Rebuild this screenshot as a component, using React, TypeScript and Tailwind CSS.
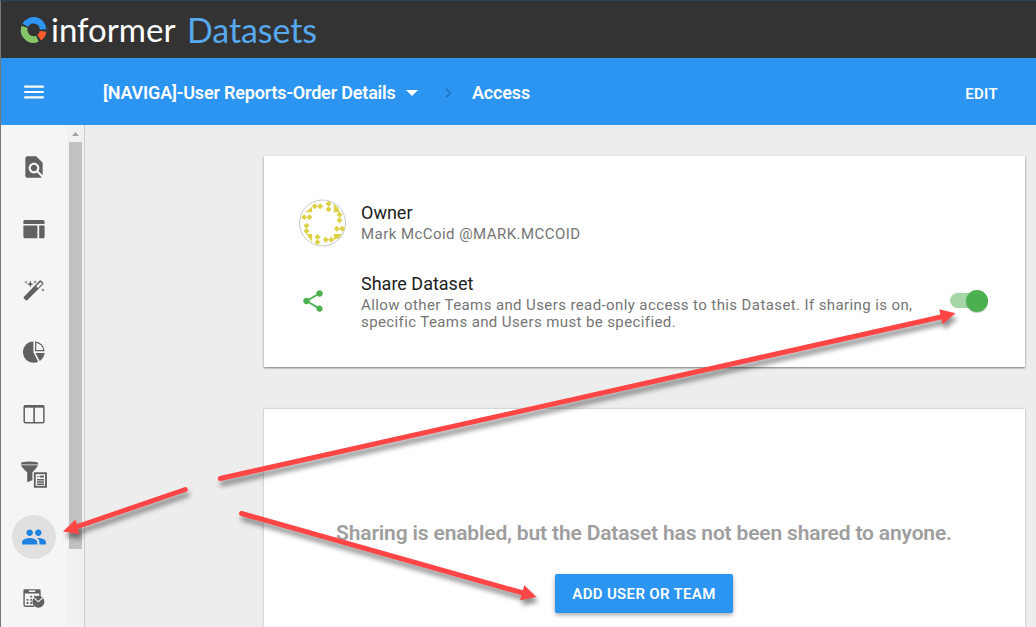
import type { ReactNode } from "react";
import { MdFindInPage, MdPeople, MdShare, MdMenu } from "react-icons/md";

const DIAMONDS = [
  [105, 79], [121, 79], [146, 71], [146, 88], [179, 104], [179, 121], [171, 146], [187, 146],
  [73, 112], [89, 112], [80, 137], [80, 153], [113, 171], [113, 187], [138, 179], [154, 179],
];

function Logo() {
  return (
    <svg width="28" height="28" viewBox="0 0 28 28" className="shrink-0" fill="none" strokeWidth="6.6">
      <path d="M5.4 9.3A9.4 9.4 0 0 1 23.1 13.4" stroke="#2b95f1" />
      <path d="M23.1 15.4A9.4 9.4 0 0 1 19.2 21.8" stroke="#ff5a2c" />
      <path d="M17.4 22.7A9.4 9.4 0 0 1 4.7 10.9" stroke="#87c668" />
    </svg>
  );
}

function LayoutIcon() {
  return (
    <svg width="26" height="26" viewBox="0 0 26 26" fill="#616161">
      <path d="M2.4 7.9V5.4Q2.4 3.9 3.9 3.9H22Q23.6 3.9 23.6 5.4V7.9Z" />
      <path d="M2.4 9.4H16.4V22.3H3.9Q2.4 22.3 2.4 20.8Z" />
      <path d="M18.2 9.4H23.6V20.8Q23.6 22.3 22 22.3H18.2Z" />
    </svg>
  );
}

function WandIcon() {
  return (
    <svg width="26" height="26" viewBox="0 1 26 26" fill="#616161">
      <path fillRule="evenodd" d="M2.8 20.1L18.4 3.8Q19.3 2.9 20.3 3.8L22 5.5Q22.9 6.5 22 7.4L6.2 23.2Q5.5 23.8 4.8 23.2L2.8 21.3Q2.3 20.7 2.8 20.1ZM15.2 9.2L17 11L21.2 6.7L19.4 4.9Z" />
      <path d="M9.3 3.4L10.2 6.2L12.8 7L10.2 7.9L9.3 10.6L8.4 7.9L5.8 7L8.4 6.2Z" />
      <path d="M5 3.5L5.5 4.7L6.7 5.1L5.5 5.6L5 6.8L4.5 5.6L3.3 5.1L4.5 4.7ZM14 3.3L14.5 4.5L15.7 5L14.5 5.5L14 6.7L13.5 5.5L12.3 5L13.5 4.5ZM21.9 11.2L22.4 12.4L23.6 12.9L22.4 13.4L21.9 14.6L21.4 13.4L20.2 12.9L21.4 12.4Z" />
    </svg>
  );
}

function PieIcon() {
  return (
    <svg width="26" height="26" viewBox="0 0 26 26" fill="#616161">
      <path d="M12.4 2.4A10.7 10.7 0 1 0 17.2 22.8L12.4 13.2Z" />
      <path d="M14.7 3.1A9.5 9.5 0 0 1 22.9 11.7H14.7Z" fill="none" stroke="#616161" strokeWidth="1.2" />
      <path d="M14.4 14H23.6Q23.2 18.9 18.8 22Z" />
    </svg>
  );
}

function ColumnsIcon() {
  return (
    <svg width="26" height="26" viewBox="0 0 26 26" fill="none" stroke="#616161">
      <rect x="3.2" y="4.8" width="19.7" height="17" rx="1.2" strokeWidth="1.5" />
      <path d="M3 5.5H23" strokeWidth="2.4" />
      <path d="M13.1 6V22" strokeWidth="1.6" />
    </svg>
  );
}

function FilterIcon() {
  return (
    <svg width="28" height="28" viewBox="0 0 28 28" fill="#616161">
      <path d="M1 2.2Q1 .6 9.5 .6T18 2.2V3.5H1Z" />
      <path d="M1 4.2H18Q17.8 5.8 12.4 11.3V19.3L7.2 21.2V11.3Q1.2 5.8 1 4.2Z" />
      <rect x="14.8" y="12.2" width="11.2" height="13.6" fill="#f5f5f5" stroke="#616161" strokeWidth="1.9" />
      <path d="M17 18.7H24M17 21H24M17 23.3H24" stroke="#616161" strokeWidth="1.4" />
      <path d="M17 15.6H19.3" stroke="#616161" strokeWidth="0.8" />
      <path d="M19.8 15.6H24" stroke="#616161" strokeWidth="2" />
    </svg>
  );
}

function ScheduleIcon() {
  return (
    <svg width="26" height="26" viewBox="0 0 26 26" fill="#616161">
      <path d="M3.6 3.2H18.3Q19.6 3.2 19.6 4.5V7.6H2.4V4.5Q2.4 3.2 3.6 3.2Z" />
      <path d="M3.1 7V18.9Q3.1 20.3 4.5 20.3H13M19 7V10" fill="none" stroke="#616161" strokeWidth="1.4" />
      <path d="M8 5.2H14.3" stroke="#f5f5f5" strokeWidth="1.6" />
      <path d="M9.3 10.6H11.1M13 10.6H14.8M5.6 13.8H7.4M9.3 13.8H11.1M5.6 17H7.4M9.3 17H11.1" stroke="#616161" strokeWidth="1.8" />
      <circle cx="17.4" cy="15.7" r="6" />
      <path d="M13.2 11.8L17.2 15.8L22 11.6" fill="none" stroke="#f5f5f5" strokeWidth="1.2" />
    </svg>
  );
}

function NavItem({ active, children }: { active?: boolean; children: ReactNode }) {
  return (
    <div className="flex h-[61.6px] shrink-0 items-center justify-center">
      <div className={active ? "flex size-11 items-center justify-center rounded-full bg-[#e0e0e0] text-[#1e82e0]" : "flex size-11 items-center justify-center text-[#616161]"}>
        {children}
      </div>
    </div>
  );
}

function Avatar() {
  return (
    <svg width="48" height="48" viewBox="57.5 57 144 144" fill="#ddd147">
      <circle cx="128" cy="129" r="69" fill="#fff" stroke="#bdbdbd" strokeWidth="2.5" />
      {DIAMONDS.map(([x, y]) => (
        <path key={`${x}-${y}`} d={`M${x - 9} ${y}L${x} ${y - 9}L${x + 9} ${y}L${x} ${y + 9}Z`} />
      ))}
      <path d="M76 97L97 80V97ZM162 71L175 84L179 97H162ZM162 162H187L177 175L162 179ZM80 162H97V187Z" />
    </svg>
  );
}

function Arrows() {
  return (
    <svg width="1036" height="627" viewBox="1 1 1036 627" className="pointer-events-none absolute top-0 left-0 [filter:drop-shadow(2px_5px_2.5px_rgba(0,0,0,0.45))]" fill="#ff4545" stroke="#ff4545">
      <g strokeWidth="5" strokeLinecap="round">
        <path d="M220.3 478.5L942 316.8" />
        <path d="M185.3 489.5L76 527" />
        <path d="M241.5 513.5L523 593" />
      </g>
      <g stroke="none">
        <path d="M939.3 309.3L955.5 313.3L942.6 324.3Z" />
        <path d="M63 531.5L75.5 519.5L79.5 534.2Z" />
        <path d="M524.3 585.3L536.5 597L520 600.2Z" />
      </g>
    </svg>
  );
}

export default function App() {
  return (
    <div className="relative flex h-[627px] w-[1036px] flex-col overflow-hidden border-t border-l border-t-[#2a4457] border-l-[#777] bg-[#ededed] font-[Roboto,sans-serif]">
      <header className="flex h-[57px] shrink-0 items-center bg-[#333333] pl-[19px] font-[Lato,sans-serif]">
        <Logo />
        <span className="ml-[3px] w-[136px] pb-[2px] text-[33px] leading-[40px] whitespace-nowrap text-white">informer</span>
        <span className="mt-[1px] text-[34px] leading-[40px] tracking-[-0.1px] whitespace-nowrap text-[#57a8ee]">Datasets</span>
      </header>

      <div className="flex h-[67px] shrink-0 items-center bg-[#2b95f1] pr-[38px] pl-[20px] font-semibold text-white">
        <MdMenu size={26} className="mt-px" />
        <span className="ml-[56px] w-[293px] pt-[2px] text-[18px] tracking-[-0.18px] whitespace-nowrap">[NAVIGA]-User Reports-Order Details</span>
        <svg width="12" height="6" viewBox="0 0 12 6" className="mt-[2px] ml-[10px] shrink-0" fill="#fff"><path d="M0 0H12L6 6Z" /></svg>
        <svg width="7" height="10" viewBox="0 0 7 10" className="mt-[3px] ml-[27px] shrink-0" fill="none" stroke="#1f72ba" strokeWidth="1.4"><path d="M1 .8L5.5 5L1 9.2" /></svg>
        <span className="ml-[20px] pt-[2px] text-[18px] tracking-[-0.15px]">Access</span>
        <span className="ml-auto pt-[5px] text-[15px] tracking-[0.3px]">EDIT</span>
      </div>

      <div className="flex min-h-0 flex-1">
        <nav className="flex w-[66px] shrink-0 flex-col overflow-hidden bg-[#f5f5f5] pt-[11.6px]">
          <NavItem><MdFindInPage size={26} /></NavItem>
          <NavItem><LayoutIcon /></NavItem>
          <NavItem><WandIcon /></NavItem>
          <NavItem><PieIcon /></NavItem>
          <NavItem><ColumnsIcon /></NavItem>
          <NavItem><FilterIcon /></NavItem>
          <NavItem active><MdPeople size={26} /></NavItem>
          <NavItem><ScheduleIcon /></NavItem>
        </nav>
        <div className="flex w-[18px] shrink-0 flex-col items-center border-r border-[#cccccc] bg-[#f1f1f1]">
          <svg width="7" height="4" viewBox="0 0 7 4" className="mt-[7px] mb-[6px] shrink-0" fill="#a0a0a0"><path d="M0 4L3.5 0L7 4Z" /></svg>
          <div className="h-[407px] w-[13px] bg-[#c1c1c1]" />
        </div>

        <main className="flex flex-1 flex-col gap-[42px] pt-[31px] pr-[11px] pl-[179px]">
          <section className="flex h-[211px] shrink-0 flex-col bg-white pr-[37.5px] pl-[35px] shadow-[0_1px_2px_rgba(0,0,0,0.5)]">
            <div className="flex pt-[43px]">
              <Avatar />
              <div className="ml-[14px] pt-[3px]">
                <div className="text-[18px] leading-[22px] text-[#212121]">Owner</div>
                <div className="pt-px text-[15px] leading-[19px] tracking-[0.45px] text-[#757575]">Mark McCoid @MARK.MCCOID</div>
              </div>
            </div>
            <div className="flex pt-[26px]">
              <div className="w-[62px] pt-[15px] pl-[1px] text-[#4caf50]"><MdShare size={26} /></div>
              <div className="w-[570px] whitespace-nowrap">
                <div className="text-[18px] leading-[22px] text-[#212121]">Share Dataset</div>
                <div className="pt-[2px] text-[15px] leading-[17px] tracking-[0.395px] text-[#757575]">
                  Allow other Teams and Users read-only access to this Dataset. If sharing is on,<br />
                  specific Teams and Users must be specified.
                </div>
              </div>
              <div className="mt-[20px] ml-auto flex h-[15px] w-[38px] items-center justify-end rounded-full bg-[#a5d6a7]">
                <div className="size-[22px] shrink-0 rounded-full bg-[#4caf50] shadow-[0_1px_1px_rgba(0,0,0,0.2)]" />
              </div>
            </div>
          </section>

          <section className="flex flex-1 flex-col items-center bg-white pt-[111px] pr-[1px] shadow-[0_0_2px_rgba(0,0,0,0.3)]">
            <p className="text-[21px] leading-[26px] font-semibold tracking-[-0.165px] whitespace-nowrap text-[#9e9e9e]">Sharing is enabled, but the Dataset has not been shared to anyone.</p>
            <button className="mt-[28px] h-[39px] w-[178px] shrink-0 rounded-[2px] bg-[#2b95f1] pt-[2px] text-[15px] font-semibold tracking-[0.33px] whitespace-nowrap text-white shadow-[0_2px_4px_rgba(0,0,0,0.35)]">ADD USER OR TEAM</button>
          </section>
        </main>
      </div>
      <Arrows />
    </div>
  );
}
